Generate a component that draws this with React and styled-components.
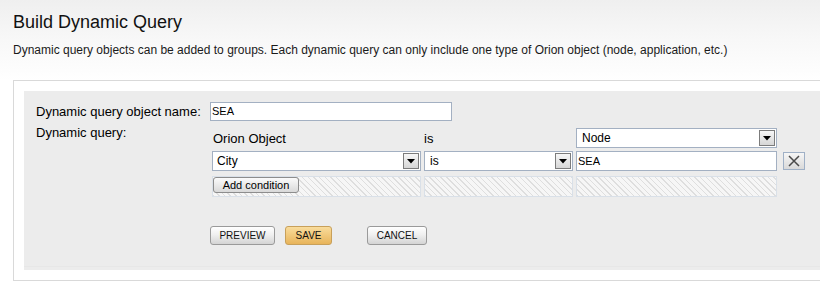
import React from 'react';
import styled, { createGlobalStyle } from 'styled-components';

const Global = createGlobalStyle`
  html, body { margin: 0; padding: 0; }
  body {
    font-family: "Liberation Sans", Arial, sans-serif;
    background: #fff;
    overflow: hidden;
    color: #000;
  }
`;

const Page = styled.div`
  width: 820px;
  height: 300px;
  box-sizing: border-box;
  padding: 12px 0 0 13px;
  background: linear-gradient(#efefef 0px, #f8f8f8 40px, #fdfdfd 70px, #fff 80px);
  overflow: hidden;
`;

const Title = styled.h1`
  margin: 0;
  font-size: 18px;
  font-weight: normal;
  line-height: 20px;
  color: #111;
`;

const Description = styled.p`
  margin: 11px 0 0;
  font-size: 12px;
  line-height: 14px;
  color: #1a1a1a;
  white-space: nowrap;
`;

const OuterBox = styled.div`
  margin-top: 23px;
  width: 840px;
  border: 1px solid #d9d9d9;
  background: #fff;
  padding: 10px;
`;

const Panel = styled.div`
  background: #ececec;
  padding: 11px 0 25px 12px;
  box-shadow: inset 0 -3px 0 #ececec, inset 0 -4px 0 #e7e7e7;
`;

const FormRow = styled.div`
  display: flex;
  align-items: ${(p) => (p.$top ? 'flex-start' : 'center')};
  margin-top: ${(p) => p.$mt || 0}px;
`;

const Label = styled.div`
  width: 174px;
  flex: none;
  font-size: 13px;
  line-height: 14px;
  margin-top: ${(p) => p.$mt || 0}px;
`;

const TextInput = styled.div`
  box-sizing: border-box;
  width: ${(p) => (p.$w ? `${p.$w}px` : '100%')};
  height: ${(p) => p.$h || 19}px;
  border: 1px solid #a3b0c2;
  background: #fff;
  padding: 0 1px;
  font-size: 11px;
  line-height: ${(p) => (p.$h || 19) - 2}px;
  color: #000;
`;

const QueryGrid = styled.div`
  margin-left: 2px;
  display: grid;
  grid-template-columns: 209px 149px 201px 28px;
  grid-template-rows: 20px 20px 23px;
  column-gap: 3px;
  row-gap: 3px;
`;

const HeaderCell = styled.div`
  font-size: 13px;
  line-height: 22px;
  padding-left: ${(p) => p.$pl || 0}px;
`;

const SelectBox = styled.div`
  box-sizing: border-box;
  height: 20px;
  border: 1px solid #a3b0c2;
  background: #fff;
  display: flex;
  align-items: center;
  justify-content: space-between;
  padding: 0 1px 0 ${(p) => p.$pl || 4}px;
  font-size: 12px;
  color: #000;
`;

const ArrowBox = styled.span`
  box-sizing: border-box;
  width: 16px;
  height: 16px;
  border: 1px solid #7c7c7c;
  background: linear-gradient(#f7f7f7, #d6d6d6);
  display: flex;
  align-items: center;
  justify-content: center;
`;

const RemoveButton = styled.button`
  box-sizing: border-box;
  margin: 1px 0 0 3px;
  width: 22px;
  height: 18px;
  padding: 0;
  border: 1px solid #9fb0c6;
  background: linear-gradient(#f6f6f6, #d9d9d9);
  display: flex;
  align-items: center;
  justify-content: center;
`;

const HatchCell = styled.div`
  align-self: end;
  box-sizing: border-box;
  height: 21px;
  border: 1px solid #d9e0e8;
  background: repeating-linear-gradient(
    45deg,
    #dedede 0px,
    #dedede 1px,
    #f6f6f6 1px,
    #f6f6f6 4px
  );
`;

const SmallButton = styled.button`
  box-sizing: border-box;
  height: 16px;
  width: 86px;
  padding: 0;
  border: 1px solid #8d8d8d;
  border-radius: 3px;
  background: linear-gradient(#fbfbfb, #d9d9d9);
  font-family: "Liberation Sans", Arial, sans-serif;
  font-size: 11px;
  line-height: 14px;
  color: #000;
  display: block;
`;

const ButtonRow = styled.div`
  display: flex;
  margin: 29px 0 0 174px;
`;

const ActionButton = styled.button`
  box-sizing: border-box;
  height: 19px;
  width: ${(p) => p.$w}px;
  margin-right: ${(p) => p.$mr || 0}px;
  padding: 0;
  border: 1px solid ${(p) => (p.$primary ? '#c8a05a' : '#9a9a9a')};
  border-radius: 3px;
  background: ${(p) =>
    p.$primary
      ? 'linear-gradient(#f9dc9c, #e8b45a)'
      : 'linear-gradient(#ffffff, #f0f0f0 45%, #d4d4d4)'};
  font-family: "Liberation Sans", Arial, sans-serif;
  font-size: 10px;
  color: #111;
`;

const Arrow = () => (
  <svg width="8" height="5" viewBox="0 0 8 5">
    <polygon points="0,0 8,0 4,4.5" fill="#000" />
  </svg>
);

const Select = ({ value, pl }) => (
  <SelectBox $pl={pl}>
    <span>{value}</span>
    <ArrowBox>
      <Arrow />
    </ArrowBox>
  </SelectBox>
);

export default function App() {
  return (
    <>
      <Global />
      <Page>
        <Title>Build Dynamic Query</Title>
        <Description>
          Dynamic query objects can be added to groups. Each dynamic query can only include one type of Orion object (node, application, etc.)
        </Description>
        <OuterBox>
          <Panel>
            <FormRow>
              <Label>Dynamic query object name:</Label>
              <TextInput $w={242}>SEA</TextInput>
            </FormRow>
            <FormRow $top $mt={7}>
              <Label $mt={-2}>Dynamic query:</Label>
              <QueryGrid>
                <HeaderCell $pl={1}>Orion Object</HeaderCell>
                <HeaderCell>is</HeaderCell>
                <Select value="Node" pl={5} />
                <div />
                <Select value="City" />
                <Select value="is" pl={5} />
                <TextInput $h={20}>SEA</TextInput>
                <RemoveButton aria-label="Remove condition">
                  <svg width="12" height="12" viewBox="0 0 12 12">
                    <path d="M1 1 L11 11 M11 1 L1 11" stroke="#4a4a4a" strokeWidth="1.5" fill="none" />
                  </svg>
                </RemoveButton>
                <HatchCell>
                  <SmallButton>Add condition</SmallButton>
                </HatchCell>
                <HatchCell />
                <HatchCell />
                <div />
              </QueryGrid>
            </FormRow>
            <ButtonRow>
              <ActionButton $w={65} $mr={10}>PREVIEW</ActionButton>
              <ActionButton $w={47} $mr={35} $primary>SAVE</ActionButton>
              <ActionButton $w={60}>CANCEL</ActionButton>
            </ButtonRow>
          </Panel>
        </OuterBox>
      </Page>
    </>
  );
}
